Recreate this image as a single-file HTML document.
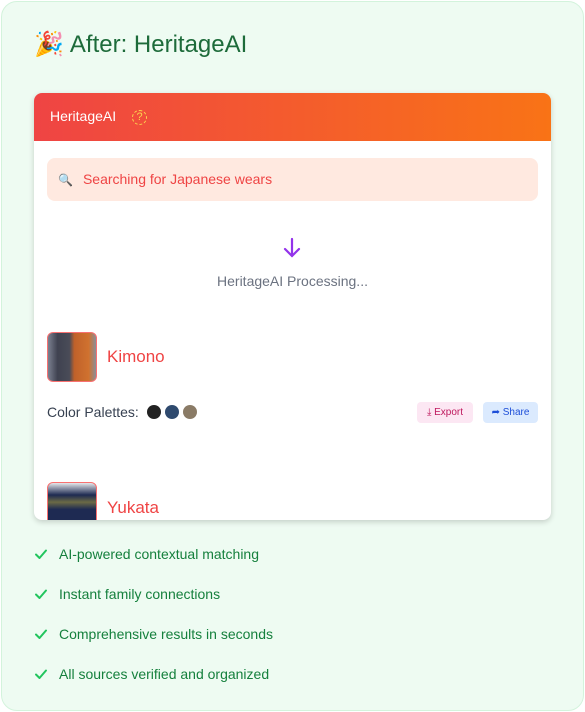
<!DOCTYPE html>
<html><head><style>
body{margin:0;width:585px;height:712px;background:#fff;font-family:"Liberation Sans",sans-serif;overflow:hidden}
.outer{position:absolute;left:1px;top:1px;width:581px;height:708px;border:1px solid #d3f3dc;border-radius:16px;background:#eefbf2}
h1{position:absolute;left:34px;top:30px;margin:0;font-weight:400;font-size:24px;color:#1d6b3a}
.card{position:absolute;left:34px;top:93px;width:517px;height:427px;background:#fff;border-radius:8px;box-shadow:0 2px 6px rgba(0,0,0,.18);overflow:hidden}
.hd{height:48px;background:linear-gradient(90deg,#ef4444,#f97316);color:#fff;font-size:14px;line-height:46px;padding-left:16px}
.q{display:inline-block;width:13px;height:13px;border:1px dashed #fcd34d;border-radius:50%;color:#fcd34d;font-size:11px;line-height:13px;text-align:center;margin-left:12px;vertical-align:1px}
.sb{position:absolute;left:13px;top:65px;width:491px;height:43px;background:#ffe9e0;border-radius:8px;color:#ef4444;font-size:14px;line-height:43px}
.t{position:absolute;font-size:14px}
.chk{position:absolute;left:59px;font-size:14px;color:#15803d}
.chk svg{position:absolute;left:-25px;top:1px}
.dot{display:inline-block;width:14px;height:14px;border-radius:50%;vertical-align:-2px;margin-left:4px}
.btn{position:absolute;top:309px;height:21px;border-radius:4px;font-size:10px;line-height:21px;text-align:center}
.img{position:absolute;left:13px;width:48px;height:48px;border:1px solid #f87171;border-radius:6px;overflow:hidden}
</style></head><body>
<div class="outer"></div>
<h1><span style="font-size:24px;margin-right:6px">🎉</span>After: HeritageAI</h1>
<div class="card">
<div class="hd">HeritageAI <span class="q">?</span></div>
<div class="sb"><span style="margin:0 10px 0 11px;color:#333;font-size:12px">🔍</span>Searching for Japanese wears</div>
<svg style="position:absolute;left:248px;top:144px" width="20" height="22" viewBox="0 0 20 22"><path d="M10 2v17M3 12l7 7 7-7" stroke="#9333ea" stroke-width="2.2" fill="none" stroke-linecap="round"/></svg>
<div class="t" style="left:0;width:517px;text-align:center;top:180px;color:#6b7280">HeritageAI Processing...</div>
<div class="img" style="top:239px;background:linear-gradient(90deg,#7b8090 0,#3f4250 20%,#4a4c58 45%,#c0612a 55%,#d0722f 85%,#8a8e98 100%)"></div>
<div class="t" style="left:73px;top:254px;font-size:17px;color:#ef4444">Kimono</div>
<div class="t" style="left:13px;top:311px;color:#374151">Color Palettes: <span class="dot" style="background:#222"></span><span class="dot" style="background:#2f4a6e"></span><span class="dot" style="background:#8a7b66"></span></div>
<div class="btn" style="left:383px;width:56px;background:#fce7f3;color:#be185d">⤓ Export</div>
<div class="btn" style="left:449px;width:55px;background:#dbeafe;color:#1d4ed8">➦ Share</div>
<div class="img" style="top:389px;background:linear-gradient(180deg,#e5e7eb 0,#1e2a52 25%,#6b6a45 40%,#1e2a52 55%)"></div>
<div class="t" style="left:73px;top:405px;font-size:17px;color:#ef4444">Yukata</div>
</div>
<div class="chk" style="top:546px"><svg width="14" height="14" viewBox="0 0 14 14"><path d="M2 7.5l3.5 3.5L12 3.5" stroke="#22c55e" stroke-width="2" fill="none" stroke-linecap="round" stroke-linejoin="round"/></svg>AI-powered contextual matching</div>
<div class="chk" style="top:586px"><svg width="14" height="14" viewBox="0 0 14 14"><path d="M2 7.5l3.5 3.5L12 3.5" stroke="#22c55e" stroke-width="2" fill="none" stroke-linecap="round" stroke-linejoin="round"/></svg>Instant family connections</div>
<div class="chk" style="top:626px"><svg width="14" height="14" viewBox="0 0 14 14"><path d="M2 7.5l3.5 3.5L12 3.5" stroke="#22c55e" stroke-width="2" fill="none" stroke-linecap="round" stroke-linejoin="round"/></svg>Comprehensive results in seconds</div>
<div class="chk" style="top:666px"><svg width="14" height="14" viewBox="0 0 14 14"><path d="M2 7.5l3.5 3.5L12 3.5" stroke="#22c55e" stroke-width="2" fill="none" stroke-linecap="round" stroke-linejoin="round"/></svg>All sources verified and organized</div>
</body></html>
